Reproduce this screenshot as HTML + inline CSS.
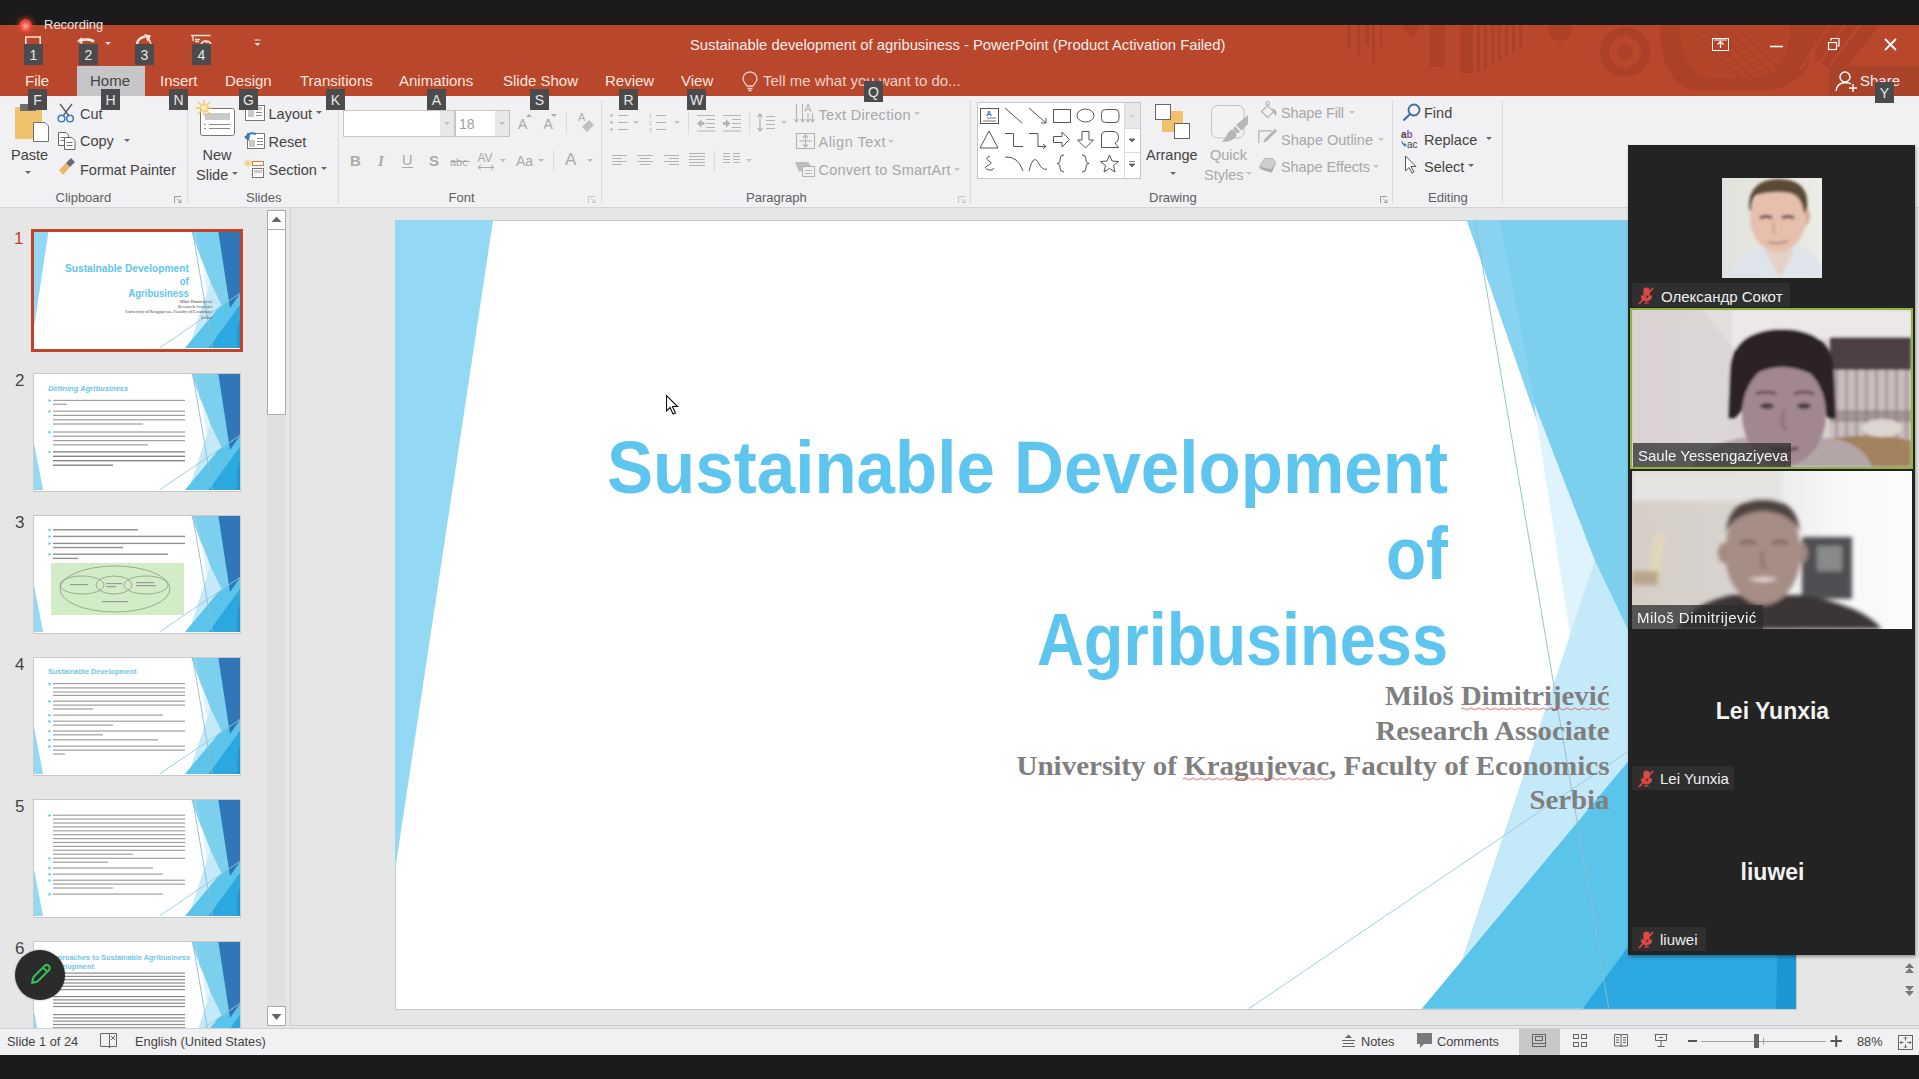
<!DOCTYPE html>
<html><head><meta charset="utf-8">
<style>
*{margin:0;padding:0;box-sizing:border-box}
html,body{width:1919px;height:1079px;overflow:hidden;background:#e6e6e6;font-family:"Liberation Sans",sans-serif;position:relative}
.a{position:absolute}
.t{position:absolute;white-space:nowrap;line-height:1}
#topbar{left:0;top:0;width:1919px;height:25px;background:#1b1b1b}
#titlebar{left:0;top:25px;width:1919px;height:71px;background:#b8472b;overflow:hidden}
#ribbon{left:0;top:96px;width:1919px;height:112px;background:#f1f0f2;border-bottom:1px solid #d5d5d5}
#status{left:0;top:1026px;width:1919px;height:29px;background:#f1f0f2;border-top:1px solid #c8c8c8}
#bottombar{left:0;top:1055px;width:1919px;height:24px;background:#1b1b1b}
.kt{position:absolute;width:19px;height:21px;background:#4b4b4d;color:#e8e8e8;font-size:14px;line-height:23px;text-align:center}
.tab{position:absolute;top:73px;font-size:15px;color:#fbe6df;line-height:15px}
.rt{position:absolute;font-size:15px;color:#444;line-height:15px;white-space:nowrap}
.rd{color:#a6a6a6}
.gl{position:absolute;top:190px;font-size:13.5px;color:#666;line-height:14px;white-space:nowrap}
.sep{position:absolute;top:100px;width:1px;height:104px;background:#dadada}
.dd{position:absolute;width:0;height:0;border-left:3px solid transparent;border-right:3px solid transparent;border-top:3px solid #666}
</style></head><body>
<div class="a" id="topbar"></div>
<div class="a" id="titlebar"></div>
<div class="a" id="ribbon"></div>
<div class="a" id="bottombar"></div>
<svg class="a" style="left:0;top:0" width="1919" height="210" font-family="Liberation Sans, sans-serif">
 <!-- separators -->
 <g fill="#dcdcdc">
  <rect x="187" y="100" width="1" height="104"/><rect x="338" y="100" width="1" height="104"/><rect x="601" y="100" width="1" height="104"/><rect x="970" y="100" width="1" height="104"/><rect x="1392" y="100" width="1" height="104"/><rect x="1502" y="100" width="1" height="104"/>
 </g>
 <!-- group labels -->
 <g font-size="13" fill="#5f5f5f">
  <text x="55.5" y="202">Clipboard</text>
  <text x="246" y="202">Slides</text>
  <text x="448.5" y="202">Font</text>
  <text x="746" y="202">Paragraph</text>
  <text x="1149" y="201.5">Drawing</text>
  <text x="1428" y="201.5">Editing</text>
 </g>
 <!-- launchers -->
 <g fill="none" stroke="#9a9a9a" stroke-width="1">
  <path d="M174.5 203 V196.5 H181 M177 198.5 L180.5 202 M178 202.5 H181 V199.5"/>
  <path d="M588.5 203 V196.5 H595 M591 198.5 L594.5 202 M592 202.5 H595 V199.5" stroke="#c4c4c4"/>
  <path d="M958.5 203 V196.5 H965 M961 198.5 L964.5 202 M962 202.5 H965 V199.5" stroke="#c4c4c4"/>
  <path d="M1380.5 203 V196.5 H1387 M1383 198.5 L1386.5 202 M1384 202.5 H1387 V199.5"/>
 </g>
 <!-- Clipboard group -->
 <rect x="15" y="107" width="27" height="32" rx="1" fill="#f1c16c"/>
 <rect x="20" y="104" width="16" height="7" fill="#6d6d6d"/>
 <path d="M33.5 122.5 H45 L48.5 126 V141.5 H33.5Z" fill="#fff" stroke="#707070" stroke-width="1"/>
 <text x="11" y="160" font-size="14.5" fill="#444">Paste</text>
 <path d="M25 171 L31 171 L28 174Z" fill="#666"/>
 <g fill="none" stroke="#5a5a5a" stroke-width="1.3"><path d="M60 104 L69 116 M72 104 L63 116"/></g>
 <g fill="none" stroke="#3a7bc8" stroke-width="1.5"><circle cx="61.5" cy="118.5" r="3.3"/><circle cx="70" cy="118.5" r="3.3"/></g>
 <text x="80" y="118.5" font-size="14.5" fill="#444">Cut</text>
 <g fill="#fff" stroke="#666" stroke-width="1"><path d="M58.5 132.5 H66 L68.5 135 V145.5 H58.5Z"/><path d="M64.5 137.5 H72 L75 140.5 V149.5 H64.5Z"/></g>
 <g stroke="#777" stroke-width="1"><path d="M60.5 137.5 H64 M60.5 140.5 H64 M66.5 142.5 H72.5 M66.5 145.5 H72.5"/></g>
 <text x="80" y="146" font-size="14.5" fill="#444">Copy</text>
 <path d="M124 139 L130 139 L127 142Z" fill="#666"/>
 <path d="M59 170 L66 163 L70 167 L63 175 Z" fill="#e9b96a"/><path d="M66 163 L71 158 L75 162 L70 167Z" fill="#6b6b6b"/>
 <text x="80" y="174.5" font-size="14.5" fill="#444" textLength="96">Format Painter</text>
 <!-- Slides group -->
 <rect x="200.5" y="108.5" width="34" height="27" rx="2" fill="#fff" stroke="#767676"/>
 <rect x="205" y="113" width="25" height="7" fill="#c9c9c9"/>
 <path d="M204 124.5 H206 M209 124.5 H230 M204 128.5 H206 M209 128.5 H230" stroke="#8a8a8a"/>
 <g stroke="#f5c760" stroke-width="1.4"><path d="M204 100 V116 M196 108 H212 M198.3 102.3 L209.7 113.7 M209.7 102.3 L198.3 113.7"/></g><circle cx="204" cy="108" r="3.5" fill="#fde9b8" stroke="#f5c760"/>
 <text x="202.5" y="159.5" font-size="14.5" fill="#444">New</text>
 <text x="196" y="179.5" font-size="14.5" fill="#444">Slide</text>
 <path d="M232 172 L238 172 L235 175Z" fill="#666"/>
 <rect x="245.5" y="105.5" width="19" height="15" fill="#fff" stroke="#777"/><rect x="248" y="110" width="6" height="7" fill="#c9c9c9"/><rect x="256" y="107" width="6" height="3" fill="#c9c9c9"/><path d="M256 112.5 H262 M256 115.5 H262" stroke="#888"/>
 <text x="268.5" y="118.5" font-size="14.5" fill="#444">Layout</text>
 <path d="M316 111 L322 111 L319 114Z" fill="#666"/>
 <rect x="247.5" y="133.5" width="17" height="15" fill="#fff" stroke="#777"/><rect x="249" y="140" width="6" height="7" fill="#c9c9c9"/><path d="M257 138.5 H263 M257 141.5 H263 M257 144.5 H263" stroke="#888"/>
 <path d="M246 139 Q248 131 256 134" fill="none" stroke="#3d78b8" stroke-width="2"/><path d="M244 136 L249 141 L250 135Z" fill="#3d78b8"/>
 <text x="268.5" y="146.5" font-size="14.5" fill="#444">Reset</text>
 <rect x="252.5" y="161.5" width="11" height="4" fill="#fff" stroke="#e0783a"/>
 <rect x="252.5" y="168.5" width="11" height="9" fill="#fff" stroke="#777"/><rect x="254" y="170" width="8" height="3" fill="#c9c9c9"/>
 <g stroke="#f5c760" stroke-width="1"><path d="M248 159 V167 M244 163 H252 M245 160 L251 166 M251 160 L245 166"/></g>
 <text x="268.5" y="174.5" font-size="14.5" fill="#444">Section</text>
 <path d="M321 167 L327 167 L324 170Z" fill="#666"/>
 <!-- Font group -->
 <rect x="343.5" y="110.5" width="111" height="26" fill="#fff" stroke="#c6c6c6"/>
 <rect x="440" y="111" width="14" height="25" fill="#e8e8e8"/>
 <path d="M444 122 L450 122 L447 125Z" fill="#c0c0c0"/>
 <rect x="455.5" y="110.5" width="54" height="26" fill="#fff" stroke="#c6c6c6"/>
 <rect x="495" y="111" width="14" height="25" fill="#e8e8e8"/>
 <path d="M499 122 L505 122 L502 125Z" fill="#c0c0c0"/>
 <line x1="454.5" y1="110" x2="454.5" y2="137" stroke="#c6c6c6"/>
 <text x="459" y="128.5" font-size="14" fill="#a0a0a0">18</text>
 <g font-size="14" fill="#aaa"><text x="518" y="129">A</text><text x="543.5" y="129">A</text></g>
 <path d="M526 117 L529 114 L532 117Z M551 114 L557 114 L554 117Z" fill="#aaa"/>
 <line x1="566.5" y1="112" x2="566.5" y2="134" stroke="#dcdcdc"/>
 <text x="578" y="121" font-size="11" fill="#b0b0b0">A</text><path d="M582 127 L589 120 L594 125 L587 132Z" fill="#c0c0c0"/>
 <g fill="#aaa">
  <text x="350" y="166" font-size="15" font-weight="bold">B</text>
  <text x="378" y="166" font-size="15" font-style="italic" font-family="Liberation Serif" font-weight="bold">I</text>
  <text x="402" y="165" font-size="14.5">U</text><rect x="402" y="167" width="11" height="1" />
  <text x="429" y="166" font-size="15" font-weight="bold">S</text>
  <text x="450" y="166" font-size="11">abc</text><rect x="450" y="161" width="20" height="1"/>
  <text x="477.5" y="162" font-size="12">AV</text><path d="M478 167.5 H494 M478 167.5 L481 165 M478 167.5 L481 170 M494 167.5 L491 165 M494 167.5 L491 170" stroke="#aaa" fill="none"/>
  <text x="516" y="166" font-size="14">Aa</text>
  <text x="565" y="165" font-size="17">A</text>
 </g>
 <path d="M500 159 L506 159 L503 162Z M538 159 L544 159 L541 162Z M587 159 L593 159 L590 162Z" fill="#bbb"/>
 <line x1="553.5" y1="150" x2="553.5" y2="172" stroke="#dcdcdc"/>
 <!-- Paragraph group -->
 <g stroke="#b4b4b4" stroke-width="1.2" fill="none">
  <path d="M618 115.5 H628 M618 122.5 H628 M618 129.5 H628"/>
  <path d="M656 115.5 H666 M656 122.5 H666 M656 129.5 H666"/>
  <path d="M697 115.5 H715 M706 119.5 H715 M706 123.5 H715 M706 127.5 H715 M697 131 H715"/>
  <path d="M723 115.5 H741 M732 119.5 H741 M732 123.5 H741 M732 127.5 H741 M723 131 H741"/>
  <path d="M766 116.5 H775 M766 120.5 H775 M766 124.5 H775 M766 128.5 H775 M760 114 V131 M757.5 117 L760 114 L762.5 117 M757.5 128 L760 131 L762.5 128"/>
  <path d="M612 155.5 H627 M612 158.5 H622 M612 161.5 H627 M612 164.5 H622"/>
  <path d="M637 155.5 H653 M640 158.5 H650 M637 161.5 H653 M640 164.5 H650"/>
  <path d="M664 155.5 H679 M669 158.5 H679 M664 161.5 H679 M669 164.5 H679"/>
  <path d="M689 153.5 H705 M689 156.5 H705 M689 159.5 H705 M689 162.5 H705 M689 165.5 H705"/>
  <path d="M723 153.5 H730 M733 153.5 H740 M723 156.5 H730 M733 156.5 H740 M723 159.5 H730 M733 159.5 H740 M723 162.5 H730 M733 162.5 H740"/>
 </g>
 <path d="M795 162 H808 L811 166 H802 V171 L799 172 Z" fill="#bdbdbd"/>
 <path d="M697 123.5 L701.5 119.3 V122 H704.5 V125 H701.5 V127.7Z M730.5 123.5 L726 119.3 V122 H723 V125 H726 V127.7Z" fill="#b4b4b4"/>
 <g fill="#b4b4b4"><circle cx="611.5" cy="115.5" r="1.3"/><circle cx="611.5" cy="122.5" r="1.3"/><circle cx="611.5" cy="129.5" r="1.3"/>
  <text x="649" y="118" font-size="5">1</text><text x="649" y="125" font-size="5">2</text><text x="649" y="132" font-size="5">3</text>
 </g>
 <path d="M633 121 L639 121 L636 124Z M674 121 L680 121 L677 124Z M781 121 L787 121 L784 124Z M746 159 L752 159 L749 162Z" fill="#c4c4c4"/>
 <g stroke="#dcdcdc"><line x1="688.5" y1="112" x2="688.5" y2="134"/><line x1="749.5" y1="112" x2="749.5" y2="134"/><line x1="714.5" y1="150" x2="714.5" y2="172"/></g>
 <g stroke="#b4b4b4" fill="none" stroke-width="1.1">
  <path d="M796.5 104 V121 M802.5 104 V121 M808 113 V121 M812.5 113 V121"/><path d="M794.5 119 L796.5 122 L798.5 119 M800.5 119 L802.5 122 L804.5 119 M806 119 L808 122 L810 119 M810.5 119 L812.5 122 L814.5 119"/><text x="804.5" y="112" font-size="10.5" fill="#b4b4b4" stroke="none">A</text>
  <rect x="796.5" y="133.5" width="18" height="15"/><path d="M805.5 135 V147 M803 137.5 L805.5 135 L808 137.5 M803 144.5 L805.5 147 L808 144.5 M799 141 H812" />
  <rect x="802.5" y="166.5" width="12" height="10"/><path d="M805 170.5 H812 M805 173.5 H812"/>
 </g>
 <g font-size="14.5" fill="#a8a8a8">
  <text x="818.5" y="119.5" textLength="92">Text Direction</text>
  <text x="818.5" y="147" textLength="67">Align Text</text>
  <text x="818.5" y="175" textLength="132">Convert to SmartArt</text>
 </g>
 <path d="M914 112 L920 112 L917 115Z M888 140 L894 140 L891 143Z M954 168 L960 168 L957 171Z" fill="#c4c4c4"/>
 <!-- Drawing group -->
 <rect x="977.5" y="102.5" width="163" height="76" fill="#fff" stroke="#c6c6c6"/>
 <rect x="1124" y="103" width="16" height="25" fill="#e8e8e8"/>
 <line x1="1124.5" y1="103" x2="1124.5" y2="178" stroke="#dcdcdc"/>
 <line x1="1124" y1="128.5" x2="1140" y2="128.5" stroke="#dcdcdc"/><line x1="1124" y1="152.5" x2="1140" y2="152.5" stroke="#dcdcdc"/>
 <path d="M1129.5 117 L1132 114.5 L1134.5 117Z" fill="#c8c8c8"/>
 <path d="M1129 139 L1135 139 L1132 142Z M1129 164 L1135 164 L1132 167Z M1129 161.5 H1135" fill="#666" stroke="#666" stroke-width=".8"/>
 <g fill="none" stroke="#555" stroke-width="1">
  <rect x="980.5" y="108.5" width="18" height="15"/><path d="M987 118 H996 M983 121 H996" stroke="#777"/>
  <path d="M1005 108 L1022 123"/><path d="M1029 108 L1046 123 M1046 118 V123 H1041"/>
  <rect x="1053.5" y="109.5" width="17" height="13"/>
  <ellipse cx="1085.5" cy="115.5" rx="8.5" ry="6.5"/>
  <rect x="1101.5" y="109.5" width="17.5" height="13" rx="4"/>
  <path d="M989 131 L998 148 H980 Z"/>
  <path d="M1005 133.5 H1013.5 V146.5 H1023"/>
  <path d="M1029 133.5 H1038 V146.5 H1046 M1043 144 L1046 146.5 L1043 149"/>
  <path d="M1053.5 136.5 H1062 V132 L1069.5 139.5 L1062 147 V142.5 H1053.5Z"/>
  <path d="M1082 131.5 V140 H1077.5 L1085.5 148 L1093.5 140 H1089 V131.5Z"/>
  <path d="M1101.5 147.5 V136 Q1101.5 131.5 1106 131.5 H1113 Q1118.5 131.5 1118.5 138 Q1118.5 142 1115 143 L1118.5 147.5Z"/>
  <path d="M990 156 Q984 158 989 161 Q994 163 987 166 Q983 168 989 170 Q993 171 994 168"/>
  <path d="M1005 157 Q1018 156 1023 171"/>
  <path d="M1029 171 Q1033 154 1038 162 Q1042 171 1047 169"/>
  <path d="M1064 155 Q1060 155 1060 159 V161 Q1060 163 1057 163.5 Q1060 164 1060 166 V168 Q1060 172 1064 172"/>
  <path d="M1082 155 Q1086 155 1086 159 V161 Q1086 163 1089 163.5 Q1086 164 1086 166 V168 Q1086 172 1082 172"/>
  <path d="M1109.5 155 L1112 161 L1118.5 161.5 L1113.5 165.5 L1115 172 L1109.5 168.5 L1104 172 L1105.5 165.5 L1100.5 161.5 L1107 161Z"/>
 </g>
 <text x="986" y="116" font-size="8" fill="#3c6fb6" font-weight="bold">A</text>
 <rect x="1162" y="111" width="21" height="21" fill="#f1c16c"/>
 <rect x="1155.5" y="104.5" width="15" height="15" fill="#fff" stroke="#666"/>
 <rect x="1174.5" y="123.5" width="15" height="15" fill="#fff" stroke="#666"/>
 <text x="1146" y="160" font-size="14.5" fill="#444">Arrange</text>
 <path d="M1170 172 L1176 172 L1173 175Z" fill="#666"/>
 <rect x="1211.5" y="105.5" width="32.5" height="32.5" rx="6" fill="#f3f1f4" stroke="#c4c4c4"/>
 <path d="M1248 115 L1248 124 L1241.5 130.5 L1236 125Z" fill="#b6b6b6"/>
 <path d="M1235 126.5 L1240 131.5 L1238 133.5 L1233 128.5Z" fill="#b6b6b6"/>
 <path d="M1232 129.5 Q1237 130 1236.5 136 Q1234 141.5 1222 142 Q1226 137 1228 133 Q1229.5 130 1232 129.5Z" fill="#b6b6b6"/>
 <g fill="none" stroke="#b4b4b4" stroke-width="1.2">
  <path d="M1261.5 111.5 L1267.5 105.5 L1273.5 111.7 L1267.6 117.5Z"/><circle cx="1267.6" cy="103.3" r="1.8"/>
  <path d="M1258.8 143 V130.8 H1272"/>
 </g>
 <path d="M1272.5 108 Q1277 110 1276.5 114 L1275.5 116.5 Q1274.5 113 1273 112Z" fill="#b4b4b4"/>
 <path d="M1263.5 142.5 L1264.5 139 L1275 128.8 L1277.2 131 L1266.8 141.2Z" fill="#b4b4b4"/>
 <path d="M1259.5 166.5 L1264.5 158.5 H1272.5 L1275.8 162.5 L1271.6 172.2 L1261 169Z" fill="#d0ced0" stroke="#b8b8b8" stroke-width="1"/>
 <path d="M1260 166.5 L1271 169.5 L1275.5 162.5 L1271.6 172.2 L1261 169Z" fill="#aaa"/>
 <text x="1210" y="160" font-size="14.5" fill="#a8a8a8">Quick</text>
 <text x="1204" y="179.5" font-size="14.5" fill="#a8a8a8">Styles</text>
 <path d="M1246 172 L1252 172 L1249 175Z" fill="#c4c4c4"/>
 <g font-size="14.5" fill="#a8a8a8">
  <text x="1281" y="117.5" textLength="63">Shape Fill</text>
  <text x="1281" y="144.5" textLength="92">Shape Outline</text>
  <text x="1281" y="171.5" textLength="89">Shape Effects</text>
 </g>
 <path d="M1349 111 L1355 111 L1352 114Z M1378 138 L1384 138 L1381 141Z M1373 165 L1379 165 L1376 168Z" fill="#c4c4c4"/>
 <!-- Editing group -->
 <circle cx="1414" cy="110" r="5.5" fill="none" stroke="#3f6aa6" stroke-width="1.8"/><path d="M1410 114 L1403.5 120.5" stroke="#3f6aa6" stroke-width="2.2"/>
 <text x="1424" y="118" font-size="14.5" fill="#444">Find</text>
 <text x="1401" y="138" font-size="10" fill="#444" font-weight="bold">a<tspan fill="#8a5aa8">b</tspan></text><text x="1407" y="148" font-size="10" fill="#444">ac</text><path d="M1402 141 Q1402 145 1406 145 M1404 143.5 L1406 145 L1404 146.5" fill="none" stroke="#3d78b8" stroke-width="1.1"/>
 <text x="1424" y="145" font-size="14.5" fill="#444">Replace</text>
 <path d="M1486 137 L1492 137 L1489 140Z" fill="#666"/>
 <path d="M1405.5 156 V171 L1409 167.5 L1412 173 L1414 172 L1411 166.5 L1416 166.5Z" fill="#fff" stroke="#555"/>
 <text x="1424" y="172" font-size="14.5" fill="#444">Select</text>
 <path d="M1468 164 L1474 164 L1471 167Z" fill="#666"/>
</svg>
<svg width="0" height="0" style="position:absolute">
 <defs>
  <symbol id="deco" viewBox="0 0 1400 788">
   <polygon points="0,0 98,0 0,650" fill="#93d9f3"/>
   <polygon points="1071,0 1400,0 1400,788 1260,516" fill="#7dcfee"/>
   <polygon points="1071,0 1104,0 1144,209" fill="#88d4f0"/>
   <polygon points="1138,182 1199,340 1175,419" fill="#def3fb"/>
   <polygon points="1199,340 1290,530 1053,779" fill="#c4e9f8"/>
   <polygon points="1026,788 1253,516 1400,400 1400,788" fill="#5bc4ea"/>
   <polygon points="1187,788 1400,495 1400,788" fill="#2ba8e0"/>
   <polygon points="1380,788 1384,640 1400,600 1400,788" fill="#1d96d2"/>
   <polygon points="1253,0 1400,0 1400,420 1332,516" fill="#2f77b8"/>
   <line x1="1079" y1="0" x2="1213" y2="788" stroke="#8fbccc" stroke-width="0.9" vector-effect="non-scaling-stroke"/>
   <line x1="853" y1="788" x2="1400" y2="417" stroke="#93cadc" stroke-width="0.9" vector-effect="non-scaling-stroke"/>
  </symbol>
  <symbol id="deco2" viewBox="0 0 1400 788">
   <polygon points="0,470 62,788 0,788" fill="#93d9f3"/>
   <polygon points="1071,0 1400,0 1400,788 1260,516" fill="#7dcfee"/>
   <polygon points="1071,0 1104,0 1144,209" fill="#88d4f0"/>
   <polygon points="1138,182 1199,340 1175,419" fill="#def3fb"/>
   <polygon points="1199,340 1290,530 1053,779" fill="#c4e9f8"/>
   <polygon points="1026,788 1253,516 1400,400 1400,788" fill="#5bc4ea"/>
   <polygon points="1187,788 1400,495 1400,788" fill="#2ba8e0"/>
   <polygon points="1380,788 1384,640 1400,600 1400,788" fill="#1d96d2"/>
   <polygon points="1253,0 1400,0 1400,420 1332,516" fill="#2f77b8"/>
   <line x1="1079" y1="0" x2="1213" y2="788" stroke="#8fbccc" stroke-width="0.9" vector-effect="non-scaling-stroke"/>
   <line x1="853" y1="788" x2="1400" y2="417" stroke="#93cadc" stroke-width="0.9" vector-effect="non-scaling-stroke"/>
  </symbol>
  <symbol id="s1text" viewBox="0 0 1400 788">
   <g font-family="Liberation Sans" font-weight="bold" fill="#5ec5ee" text-anchor="end" font-size="74">
    <text x="1052" y="271.8" textLength="841" lengthAdjust="spacingAndGlyphs">Sustainable Development</text>
    <text x="1052" y="357.9" textLength="62" lengthAdjust="spacingAndGlyphs">of</text>
    <text x="1052" y="443.9" textLength="411" lengthAdjust="spacingAndGlyphs">Agribusiness</text>
   </g>
   <g font-family="Liberation Serif" font-weight="bold" fill="#7f7f7f" text-anchor="end" font-size="26.3">
    <text x="1213.5" y="483.7" textLength="224.5" lengthAdjust="spacingAndGlyphs">Miloš Dimitrijević</text>
    <text x="1213.5" y="518.6" textLength="234" lengthAdjust="spacingAndGlyphs">Research Associate</text>
    <text x="1213.5" y="553.5" textLength="593" lengthAdjust="spacingAndGlyphs">University of Kragujevac, Faculty of Economics</text>
    <text x="1213.5" y="588" textLength="80" lengthAdjust="spacingAndGlyphs">Serbia</text>
   </g>
  </symbol>
  <pattern id="txt" width="10" height="5.2" patternUnits="userSpaceOnUse"><rect width="10" height="2.2" y="1" fill="#8c8c8c"/></pattern>
 </defs>
</svg>
<!-- slide panel -->
<div class="a" style="left:290px;top:208px;width:1px;height:818px;background:#d0d0d0"></div>
<div class="a" style="left:267px;top:210px;width:19px;height:816px;background:#e0e0e0"></div>
<div class="a" style="left:267px;top:210px;width:19px;height:20px;background:#fff;border:1px solid #ababab"></div>
<div class="a" style="left:267px;top:229px;width:19px;height:186px;background:#fff;border:1px solid #ababab"></div>
<div class="a" style="left:267px;top:1006px;width:19px;height:20px;background:#fff;border:1px solid #ababab"></div>
<svg class="a" style="left:267px;top:210px" width="19" height="816"><path d="M4.5 12 L9.5 6.5 L14.5 12Z" fill="#666"/><path d="M4.5 804 L9.5 810 L14.5 804Z" fill="#666"/></svg>
<svg class="a" style="left:0;top:208px" width="267" height="820" font-family="Liberation Sans">
 <g font-size="17" fill="#444">
  <text x="14" y="36" fill="#c0401f">1</text><text x="15" y="178">2</text><text x="15" y="320">3</text><text x="15" y="462">4</text><text x="15" y="604">5</text><text x="15" y="746">6</text>
 </g>
 <rect x="32.5" y="22.5" width="209" height="120" fill="none" stroke="#c1432a" stroke-width="3"/>
 <g stroke="#c9c9c9" fill="#fff">
  <rect x="33.5" y="165.5" width="207" height="118"/>
  <rect x="33.5" y="307.5" width="207" height="118"/>
  <rect x="33.5" y="449.5" width="207" height="118"/>
  <rect x="33.5" y="591.5" width="207" height="118"/>
  <rect x="33.5" y="733.5" width="207" height="118"/>
 </g>
 <rect x="34" y="24" width="206" height="117" fill="#fff"/>
 <use href="#deco" x="34" y="24" width="206" height="116"/>
 <use href="#s1text" x="34" y="24" width="206" height="116"/>
 <use href="#deco2" x="34" y="166" width="206" height="116"/>
 <use href="#deco2" x="34" y="308" width="206" height="116"/>
 <use href="#deco2" x="34" y="450" width="206" height="116"/>
 <use href="#deco2" x="34" y="592" width="206" height="116"/>
 <use href="#deco2" x="34" y="734" width="206" height="116"/>
 <!-- thumb2 -->
 <text x="48" y="182.6" font-size="7.6" font-style="italic" font-weight="bold" fill="#6cc6ea">Defining Agribusiness</text>
 <g fill="#a0a0a0"><rect x="53" y="191.8" width="132" height="1.2"/><rect x="53" y="195.6" width="14" height="1.2"/><rect x="53" y="202.6" width="132" height="1.2"/><rect x="53" y="206.8" width="132" height="1.2"/><rect x="53" y="211.2" width="132" height="1.2"/><rect x="53" y="215.4" width="90" height="1.2"/><rect x="53" y="223.4" width="132" height="1.2"/><rect x="53" y="227.6" width="132" height="1.2"/><rect x="53" y="232.0" width="132" height="1.2"/><rect x="53" y="236.2" width="95" height="1.2"/></g>
 <g fill="#858585"><rect x="53" y="243.2" width="132" height="1.4"/><rect x="53" y="247.6" width="132" height="1.4"/><rect x="53" y="252.0" width="132" height="1.4"/><rect x="53" y="256.5" width="60" height="1.4"/></g>
 <g fill="#5ec5ee"><path d="M48.5 191.0 l3 1.6 l-3 1.6Z"/><path d="M48.5 201.8 l3 1.6 l-3 1.6Z"/><path d="M48.5 222.6 l3 1.6 l-3 1.6Z"/><path d="M48.5 242.4 l3 1.6 l-3 1.6Z"/></g>
 <g fill="#8f8f8f"><rect x="53" y="321.0" width="85" height="1.4"/><rect x="53" y="327.7" width="132" height="1.4"/><rect x="53" y="334.7" width="132" height="1.4"/><rect x="53" y="338.8" width="70" height="1.4"/><rect x="53" y="345.5" width="115" height="1.4"/><rect x="53" y="349.7" width="25" height="1.4"/></g>
 <g fill="#5ec5ee"><path d="M48.5 320.2 l3 1.6 l-3 1.6Z"/><path d="M48.5 326.9 l3 1.6 l-3 1.6Z"/><path d="M48.5 333.9 l3 1.6 l-3 1.6Z"/><path d="M48.5 344.7 l3 1.6 l-3 1.6Z"/></g>
 <rect x="51" y="355" width="133" height="52" fill="#d3ecc8"/>
 <g fill="none" stroke="#7f8f78" stroke-width=".7"><ellipse cx="115" cy="381" rx="55" ry="23"/><ellipse cx="82" cy="377" rx="22" ry="9"/><ellipse cx="114" cy="377" rx="18" ry="9"/><ellipse cx="146" cy="377" rx="22" ry="9"/></g>
 <g fill="#999"><rect x="70" y="376" width="18" height="1.2"/><rect x="106" y="375" width="16" height="1.2"/><rect x="106" y="378" width="10" height="1.2"/><rect x="136" y="374" width="18" height="1.2"/><rect x="136" y="377" width="20" height="1.2"/><rect x="102" y="393" width="26" height="1.2"/></g>
 <text x="48" y="465.5" font-size="7.3" font-weight="bold" fill="#72c6e6">Sustainable Development</text>
 <g fill="#a0a0a0"><rect x="53" y="475.0" width="132" height="1.2"/><rect x="53" y="479.3" width="132" height="1.2"/><rect x="53" y="483.4" width="132" height="1.2"/><rect x="53" y="486.8" width="132" height="1.2"/><rect x="53" y="492.6" width="132" height="1.2"/><rect x="53" y="496.5" width="132" height="1.2"/><rect x="53" y="500.4" width="40" height="1.2"/><rect x="53" y="506.5" width="110" height="1.2"/><rect x="53" y="512.6" width="132" height="1.2"/><rect x="53" y="516.5" width="60" height="1.2"/><rect x="53" y="522.4" width="132" height="1.2"/><rect x="53" y="526.2" width="50" height="1.2"/><rect x="53" y="531.2" width="105" height="1.2"/><rect x="53" y="537.6" width="132" height="1.2"/><rect x="53" y="541.5" width="132" height="1.2"/><rect x="53" y="545.4" width="12" height="1.2"/></g>
 <g fill="#5ec5ee"><path d="M48.5 474.2 l3 1.6 l-3 1.6Z"/><path d="M48.5 491.8 l3 1.6 l-3 1.6Z"/><path d="M48.5 505.7 l3 1.6 l-3 1.6Z"/><path d="M48.5 511.8 l3 1.6 l-3 1.6Z"/><path d="M48.5 521.6 l3 1.6 l-3 1.6Z"/><path d="M48.5 530.4 l3 1.6 l-3 1.6Z"/><path d="M48.5 536.8 l3 1.6 l-3 1.6Z"/></g>
 <g fill="#a0a0a0"><rect x="53" y="606.6" width="132" height="1.2"/><rect x="53" y="610.5" width="132" height="1.2"/><rect x="53" y="614.4" width="132" height="1.2"/><rect x="53" y="618.3" width="132" height="1.2"/><rect x="53" y="622.2" width="132" height="1.2"/><rect x="53" y="626.1" width="132" height="1.2"/><rect x="53" y="630.0" width="132" height="1.2"/><rect x="53" y="633.9" width="132" height="1.2"/><rect x="53" y="637.8" width="132" height="1.2"/><rect x="53" y="641.7" width="132" height="1.2"/><rect x="53" y="645.6" width="80" height="1.2"/><rect x="53" y="649.7" width="132" height="1.2"/><rect x="53" y="653.6" width="55" height="1.2"/><rect x="53" y="659.4" width="100" height="1.2"/><rect x="53" y="665.5" width="110" height="1.2"/><rect x="53" y="671.6" width="132" height="1.2"/><rect x="53" y="675.5" width="132" height="1.2"/><rect x="53" y="679.4" width="60" height="1.2"/><rect x="53" y="685.5" width="110" height="1.2"/></g>
 <g fill="#5ec5ee"><path d="M48.5 605.8 l3 1.6 l-3 1.6Z"/><path d="M48.5 648.9 l3 1.6 l-3 1.6Z"/><path d="M48.5 658.6 l3 1.6 l-3 1.6Z"/><path d="M48.5 664.7 l3 1.6 l-3 1.6Z"/><path d="M48.5 670.8 l3 1.6 l-3 1.6Z"/><path d="M48.5 684.7 l3 1.6 l-3 1.6Z"/></g>
 <text x="48" y="752" font-size="7.3" font-weight="bold" fill="#72c6e6">Approaches to Sustainable Agribusiness</text>
 <text x="48" y="760.5" font-size="7.3" font-weight="bold" fill="#72c6e6">Development</text>
 <g fill="#8c8c8c"><rect x="53" y="764.5" width="132" height="1.2"/><rect x="53" y="767.8" width="132" height="1.2"/><rect x="53" y="771.1" width="132" height="1.2"/><rect x="53" y="774.4" width="132" height="1.2"/><rect x="53" y="777.7" width="132" height="1.2"/><rect x="53" y="781.0" width="132" height="1.2"/><rect x="53" y="788.0" width="132" height="1.2"/><rect x="53" y="791.3" width="132" height="1.2"/><rect x="53" y="794.6" width="132" height="1.2"/><rect x="53" y="797.9" width="132" height="1.2"/><rect x="53" y="806.0" width="132" height="1.2"/><rect x="53" y="809.3" width="132" height="1.2"/><rect x="53" y="812.6" width="132" height="1.2"/><rect x="53" y="815.9" width="132" height="1.2"/><rect x="53" y="819.2" width="132" height="1.2"/></g>
</svg>

<!-- pencil button -->
<div class="a" style="left:15px;top:950px;width:50px;height:50px;border-radius:50%;background:#2b2b2b;box-shadow:0 0 2px rgba(0,0,0,.4)"></div>
<svg class="a" style="left:15px;top:950px" width="50" height="50"><path d="M17 33 L18.5 27 L30 15.5 Q32 14 34 16 Q35.5 18 34 20 L22.5 31.5Z M28 17.5 L32.5 22" fill="none" stroke="#35c05a" stroke-width="2" stroke-linejoin="round"/></svg>
<!-- main slide -->
<div class="a" style="left:395px;top:220px;width:1402px;height:790px;background:#fff;border:1px solid #c6c6c6"></div>
<svg class="a" style="left:395px;top:220px" width="1401" height="789"><use href="#deco" x="0" y="0" width="1401" height="789"/><g transform="translate(1,1)"><use href="#s1text" x="0" y="0" width="1400" height="788"/>
 <path d="M1065 488 q2 -2 4 0 t4 0 t4 0 t4 0 t4 0 t4 0 t4 0 t4 0 t4 0 t4 0 t4 0 t4 0 t4 0 t4 0 t4 0 t4 0 t4 0 t4 0 t4 0 t4 0 t4 0 t4 0 t4 0 t4 0 t4 0 t4 0 t4 0 t4 0 t4 0 t4 0 t4 0 t4 0 t4 0 t4 0 t4 0 t4 0 t4 0" fill="none" stroke="#e05050" stroke-width=".8"/>
 <path d="M787 558 q2 -2 4 0 t4 0 t4 0 t4 0 t4 0 t4 0 t4 0 t4 0 t4 0 t4 0 t4 0 t4 0 t4 0 t4 0 t4 0 t4 0 t4 0 t4 0 t4 0 t4 0 t4 0 t4 0 t4 0 t4 0 t4 0 t4 0 t4 0 t4 0 t4 0 t4 0 t4 0 t4 0 t4 0 t4 0 t4 0 t4 0 t4 0" fill="none" stroke="#e05050" stroke-width=".8"/>
</g></svg>
<!-- cursor -->
<svg class="a" style="left:665px;top:394px" width="16" height="22"><path d="M1.5 1.5 V17 L5 13.5 L8 20 L10.5 19 L7.5 12.5 L12.5 12.5Z" fill="#fff" stroke="#111" stroke-width="1.1"/></svg>
<!-- status bar -->
<div class="a" style="left:291px;top:1025px;width:1628px;height:1px;background:#cacaca"></div>
<div class="a" style="left:291px;top:1026px;width:1628px;height:2px;background:#e8e8e8"></div>
<div class="a" style="left:0;top:1028px;width:1919px;height:1px;background:#d2d2d2"></div>
<div class="a" style="left:0;top:1029px;width:1919px;height:26px;background:#f1f0f2"></div>
<div class="a" style="left:1519px;top:1029px;width:41px;height:26px;background:#c8c8ca"></div>
<svg class="a" style="left:0;top:1025px" width="1919" height="30" font-family="Liberation Sans">
 <g font-size="12.8" fill="#444">
  <text x="7" y="21">Slide 1 of 24</text>
  <text x="135" y="21">English (United States)</text>
  <text x="1361" y="21">Notes</text>
  <text x="1437" y="21">Comments</text>
  <text x="1857" y="21">88%</text>
 </g>
 <path d="M100.5 8.5 V21.5 H109.5 V8.5 H100.5 M109.5 8.5 H116.5 V21.5 H109.5 M108.5 21.5 L109.5 23 L110.5 21.5 M111 11 L115 15 M115 11 L111 15" fill="none" stroke="#666" stroke-width="1"/>
 <path d="M1345 13 L1348.5 9.5 L1352 13Z" fill="#666"/><path d="M1342 15.5 H1355 M1343 18.5 H1354 M1342 21.5 H1355" stroke="#666"/>
 <path d="M1417 8 H1432 V19 H1424 L1420 23 V19 H1417Z" fill="#7a7a7a"/>
 <g transform="translate(0,-2)"><rect x="1532.5" y="11.5" width="13" height="12" fill="none" stroke="#666"/><rect x="1535.5" y="13.5" width="7" height="4" fill="none" stroke="#666"/><line x1="1533" y1="20.5" x2="1545" y2="20.5" stroke="#666"/>
 <g fill="none" stroke="#666"><rect x="1573.5" y="11.5" width="5" height="4"/><rect x="1581.5" y="11.5" width="5" height="4"/><rect x="1573.5" y="19.5" width="5" height="4"/><rect x="1581.5" y="19.5" width="5" height="4"/></g>
 <path d="M1614.5 11.5 H1620.5 L1621 13 L1621.5 11.5 H1627.5 V23 H1614.5Z M1621 13 V24 M1616 14.5 H1619 M1616 17 H1619 M1616 19.5 H1619 M1623 14.5 H1626 M1623 17 H1626 M1623 19.5 H1626" fill="none" stroke="#666"/>
 <path d="M1654.5 11.5 H1667.5 M1655.5 11.5 V17.5 H1666.5 V11.5 M1661 17.5 V23 M1657.5 23.5 H1664.5 M1659 14.5 H1663" fill="none" stroke="#666"/>
 </g>
 <rect x="1688" y="15" width="9" height="2" fill="#555"/>
 <rect x="1701" y="16" width="125" height="1" fill="#a0a0a0"/>
 <rect x="1763" y="13" width="1" height="7" fill="#a0a0a0"/>
 <rect x="1754" y="9" width="5" height="14" fill="#666"/>
 <path d="M1830.5 16 H1842 M1836.2 10.5 V22" stroke="#555" stroke-width="2"/>
 <rect x="1898.5" y="10.5" width="14" height="14" fill="none" stroke="#666"/>
 <path d="M1905.5 12 V15.5 M1904 13.5 L1905.5 12 L1907 13.5 M1905.5 23 V19.5 M1904 21.5 L1905.5 23 L1907 21.5 M1900 17.5 H1903.5 M1901.5 16 L1900 17.5 L1901.5 19 M1911 17.5 H1907.5 M1909.5 16 L1911 17.5 L1909.5 19" fill="none" stroke="#666"/>
</svg>
<!-- zoom panel -->

<div class="a" style="left:1628px;top:145px;width:287px;height:810px;background:#232323;overflow:hidden;box-shadow:1px 2px 3px rgba(0,0,0,.35)">
 <!-- tile1 photo -->
 <svg class="a" style="left:94px;top:33px" width="100" height="100">
  <defs><filter id="bl1" x="-20%" y="-20%" width="140%" height="140%"><feGaussianBlur stdDeviation="1.6"/></filter>
   <linearGradient id="bg1" x1="0" y1="0" x2="1" y2="0"><stop offset="0" stop-color="#e2e2dc"/><stop offset="1" stop-color="#ecece6"/></linearGradient></defs>
  <rect width="100" height="100" fill="url(#bg1)"/>
  <g filter="url(#bl1)">
   <path d="M4 100 Q14 76 38 68 L74 66 Q94 74 100 90 V100Z" fill="#dfe4ea"/>
   <path d="M42 72 L58 100 L72 72Z" fill="#e8c4b0" opacity=".6"/>
   <rect x="44" y="58" width="26" height="12" fill="#dcb09a"/>
   <ellipse cx="82" cy="38" rx="6" ry="10" fill="#d8a894"/>
   <ellipse cx="56" cy="40" rx="28" ry="34" fill="#e6c0ac"/>
   <path d="M27 30 Q26 2 56 1 Q88 1 85 30 L82 36 Q80 18 68 15 Q50 12 34 17 Q29 22 29 34Z" fill="#5a4836"/>
   <path d="M38 40 Q44 37 50 40 M60 40 Q66 37 72 40" stroke="#4a3430" stroke-width="3" fill="none"/>
   <path d="M52 44 Q50 54 54 56" stroke="#c99a88" stroke-width="2" fill="none"/>
   <path d="M46 64 Q56 67 66 63" stroke="#b88474" stroke-width="2" fill="none"/>
  </g>
 </svg>
 <!-- label1 -->
 <div class="a" style="left:4px;top:138px;width:158px;height:24px;background:#2f2f2f"></div>
 <svg class="a" style="left:8px;top:141px" width="20" height="20"><path d="M8 4 Q8 2 10.5 2 Q13 2 13 4 V10 Q13 12.5 10.5 12.5 Q8 12.5 8 10Z M5.5 9.5 Q5.5 14.5 10.5 14.5 Q15.5 14.5 15.5 9.5 M10.5 14.5 V17 M8 17 H13" fill="#e04848" stroke="#e04848" stroke-width="1.2"/><path d="M3 18 L17 2" stroke="#e04848" stroke-width="1.6"/></svg>
 <div class="t" style="left:33px;top:144px;font-size:15px;color:#f0f0f0">Олександр Сокот</div>
 <!-- tile2 -->
 <div class="a" style="left:2px;top:163px;width:283px;height:161px;border:2px solid #8db43b;overflow:hidden;background:#d6cfd0">
  <svg class="a" style="left:0;top:0" width="279" height="157">
   <defs><filter id="bl2" x="-10%" y="-10%" width="120%" height="120%"><feGaussianBlur stdDeviation="1.8"/></filter>
    <linearGradient id="wall2" x1="0" y1="0" x2="1" y2="0"><stop offset="0" stop-color="#d4cccd"/><stop offset=".4" stop-color="#dcd5d6"/><stop offset="1" stop-color="#d0c8c9"/></linearGradient></defs>
   <rect width="279" height="157" fill="url(#wall2)"/>
   <g filter="url(#bl2)">
    <path d="M70 0 H279 V30 L200 28 Q150 32 110 48Z" fill="#ece8ea"/><rect x="0" y="0" width="100" height="157" fill="#ddd7d7" opacity=".6"/>
    <rect x="198" y="27" width="81" height="33" fill="#4e4042"/>
    <rect x="198" y="60" width="81" height="68" fill="#c9bdbe"/>
    <g fill="#a89a9c"><rect x="203" y="60" width="3" height="68"/><rect x="213" y="60" width="3" height="68"/><rect x="223" y="60" width="3" height="68"/><rect x="233" y="60" width="3" height="68"/><rect x="243" y="60" width="3" height="68"/><rect x="253" y="60" width="3" height="68"/><rect x="263" y="60" width="3" height="68"/><rect x="273" y="60" width="3" height="68"/></g>
    <rect x="198" y="100" width="81" height="12" fill="#8a7a7a" opacity=".6"/>
    <path d="M185 157 L200 128 Q240 122 279 130 V157Z" fill="#a3835f"/>
    <ellipse cx="250" cy="118" rx="20" ry="9" fill="#ddd5cf"/>
    <path d="M60 157 Q72 134 110 128 L200 128 Q232 134 240 157Z" fill="#b4a6a6"/>
    <path d="M98 60 Q100 20 150 19 Q200 20 202 60 L204 108 Q196 112 190 100 L110 100 Q102 112 96 108Z" fill="#2b2426"/>
    <ellipse cx="152" cy="104" rx="42" ry="52" fill="#a1878f"/>
    <path d="M108 78 Q112 40 152 38 Q192 40 196 78 Q180 58 150 57 Q122 58 108 78Z" fill="#2b2426"/>
    <path d="M124 84 Q134 80 144 84 M162 84 Q172 80 182 84" stroke="#5a4048" stroke-width="2.5" fill="none"/>
    <ellipse cx="135" cy="96" rx="7" ry="3" fill="#4a3a44"/><ellipse cx="172" cy="96" rx="7" ry="3" fill="#4a3a44"/>
    <path d="M152 100 Q148 116 154 120" stroke="#86707a" stroke-width="3" fill="none"/>
    <path d="M138 138 Q152 142 166 138" stroke="#5a3a44" stroke-width="3" fill="none"/>
   </g>
  </svg>
  <div class="a" style="left:1px;top:133px;width:158px;height:24px;background:rgba(44,44,44,.75)"></div>
  <div class="t" style="left:6px;top:138px;font-size:15px;color:#f4f4f4">Saule Yessengaziyeva</div>
 </div>
 <!-- tile3 -->
 <div class="a" style="left:4px;top:326px;width:280px;height:158px;overflow:hidden;background:#e0dcd8">
  <svg class="a" style="left:0;top:0" width="280" height="158">
   <defs><filter id="bl3" x="-10%" y="-10%" width="120%" height="120%"><feGaussianBlur stdDeviation="2"/></filter>
    <linearGradient id="wall3" x1="0" y1="0" x2="1" y2="0"><stop offset="0" stop-color="#d4cec6"/><stop offset=".4" stop-color="#d8d4d0"/><stop offset=".55" stop-color="#eeeeee"/><stop offset=".75" stop-color="#f8f8f8"/><stop offset="1" stop-color="#fbfbfb"/></linearGradient></defs>
   <rect width="280" height="158" fill="url(#wall3)"/>
   <g filter="url(#bl3)">
    <rect x="0" y="0" width="150" height="30" fill="#e6e4e2"/>
    <path d="M14 112 L24 60 L34 64 L28 112Z" fill="#e2d6bc"/><rect x="0" y="100" width="26" height="14" fill="#b9a68a"/>
    <rect x="170" y="66" width="50" height="62" fill="#505052"/>
    <rect x="185" y="75" width="25" height="25" fill="#8a8a8c"/>
    <path d="M45 158 Q60 132 100 124 L170 124 Q230 134 250 158Z" fill="#3b3536"/>
    <ellipse cx="92" cy="82" rx="6" ry="10" fill="#a08880"/><ellipse cx="170" cy="82" rx="6" ry="10" fill="#a08880"/>
    <ellipse cx="131" cy="82" rx="38" ry="52" fill="#a68d85"/>
    <path d="M94 62 Q96 28 131 28 Q166 28 168 62 Q160 42 131 40 Q102 42 94 62Z" fill="#4e4240"/>
    <path d="M108 72 Q116 69 124 72 M140 72 Q148 69 156 72" stroke="#5a4844" stroke-width="2.5" fill="none"/>
    <path d="M131 80 Q128 95 134 98" stroke="#8a7068" stroke-width="3" fill="none"/>
    <path d="M116 108 Q132 104 146 108 Q132 114 116 108Z" fill="#e4d6d0"/>
   </g>
  </svg>
  <div class="a" style="left:0;top:134px;width:131px;height:24px;background:rgba(44,44,44,.75)"></div>
  <div class="t" style="left:5px;top:139px;font-size:15px;letter-spacing:.45px;color:#f4f4f4">Miloš Dimitrijević</div>
 </div>
 <!-- tile4 -->
 <div class="t" style="left:0;top:555px;width:287px;padding-left:2px;text-align:center;font-size:23px;font-weight:bold;color:#f2f2f2">Lei Yunxia</div>
 <div class="a" style="left:4px;top:621px;width:102px;height:24px;background:#2f2f2f"></div>
 <svg class="a" style="left:8px;top:624px" width="20" height="20"><path d="M8 4 Q8 2 10.5 2 Q13 2 13 4 V10 Q13 12.5 10.5 12.5 Q8 12.5 8 10Z M5.5 9.5 Q5.5 14.5 10.5 14.5 Q15.5 14.5 15.5 9.5 M10.5 14.5 V17 M8 17 H13" fill="#e04848" stroke="#e04848" stroke-width="1.2"/><path d="M3 18 L17 2" stroke="#e04848" stroke-width="1.6"/></svg>
 <div class="t" style="left:32px;top:626px;font-size:15px;color:#f0f0f0">Lei Yunxia</div>
 <!-- tile5 -->
 <div class="t" style="left:0;top:715.5px;width:287px;padding-left:2px;text-align:center;font-size:23px;font-weight:bold;color:#f2f2f2">liuwei</div>
 <div class="a" style="left:4px;top:782px;width:74px;height:24px;background:#2f2f2f"></div>
 <svg class="a" style="left:8px;top:785px" width="20" height="20"><path d="M8 4 Q8 2 10.5 2 Q13 2 13 4 V10 Q13 12.5 10.5 12.5 Q8 12.5 8 10Z M5.5 9.5 Q5.5 14.5 10.5 14.5 Q15.5 14.5 15.5 9.5 M10.5 14.5 V17 M8 17 H13" fill="#e04848" stroke="#e04848" stroke-width="1.2"/><path d="M3 18 L17 2" stroke="#e04848" stroke-width="1.6"/></svg>
 <div class="t" style="left:32px;top:787px;font-size:15px;color:#f0f0f0">liuwei</div>
</div>
<!-- right side scroll arrows -->
<svg class="a" style="left:1900px;top:960px" width="19" height="40"><path d="M5 8 L9.5 3 L14 8Z M5 13 L9.5 8 L14 13Z M5 26 L14 26 L9.5 31Z M5 31 L14 31 L9.5 36Z" fill="#777"/></svg>
<!-- title bar content -->
<div class="a" style="left:0;top:0;width:1919px;height:96px">
 <svg class="a" style="left:0;top:0" width="1919" height="96">
  <defs><clipPath id="tbclip"><rect x="0" y="25" width="1919" height="71"/></clipPath></defs>
  <g clip-path="url(#tbclip)">
  <g fill="#ad4128">
   <rect x="1347" y="25" width="4" height="24"/><rect x="1357" y="25" width="3" height="30"/><rect x="1365" y="25" width="4" height="20"/><rect x="1372" y="25" width="3" height="40"/><rect x="1380" y="25" width="2" height="22"/>
   <path d="M1400 25 L1420 25 L1413 38 Z"/>
   <rect x="1430" y="25" width="15" height="42"/><rect x="1460" y="25" width="13" height="48"/>
   <rect x="1477" y="25" width="3" height="46"/><rect x="1484" y="25" width="3" height="44"/><rect x="1491" y="25" width="3" height="40"/><rect x="1498" y="25" width="3" height="36"/><rect x="1505" y="25" width="3" height="32"/><rect x="1512" y="25" width="3" height="28"/><rect x="1519" y="25" width="3" height="24"/>
   <circle cx="1560" cy="29" r="12"/>
   <circle cx="1625" cy="52" r="25"/>
   <path d="M1660 25 L1815 25 C1815 60 1805 90 1760 90 L1700 90 C1670 90 1660 60 1660 25Z"/>
   <path d="M1815 25 L1880 25 L1840 75 L1815 60Z"/>
  </g>
  <circle cx="1625" cy="52" r="16" fill="#b8472b"/>
  <circle cx="1625" cy="52" r="8" fill="#ad4128"/>
  <path d="M1680 25 L1790 25 C1790 55 1780 78 1750 78 L1715 78 C1690 78 1680 55 1680 25Z" fill="#b44529"/>
  <g stroke="#ad4128" stroke-width="3">
   <line x1="1692" y1="30" x2="1740" y2="78"/><line x1="1704" y1="30" x2="1752" y2="78"/><line x1="1716" y1="30" x2="1764" y2="78"/><line x1="1728" y1="30" x2="1773" y2="75"/><line x1="1740" y1="30" x2="1780" y2="70"/>
  </g>
  <g stroke="#b8472b" stroke-width="3">
   <line x1="1830" y1="25" x2="1800" y2="70"/><line x1="1845" y1="25" x2="1815" y2="70"/><line x1="1860" y1="25" x2="1830" y2="65"/>
  </g>
  </g>
  <rect x="1829" y="66" width="90" height="30" fill="#a9432a"/>
 </svg>
 <!-- recording -->
 <div class="a" style="left:19px;top:19px;width:13px;height:13px;border-radius:50%;background:radial-gradient(circle at 50% 55%,#ffb0a8 0%,#f0504a 45%,#d93a2d 80%);box-shadow:0 0 4px 2px rgba(255,80,40,.45)"></div>
 <div class="t" style="left:44px;top:18px;font-size:13px;color:#e9e4e4">Recording</div>
 <!-- QAT icons -->
 <svg class="a" style="left:0;top:30px" width="280" height="30">
  <path d="M25.8 14 V7 H40.2 V14" fill="none" stroke="#f3e1db" stroke-width="1.6"/>
  <path d="M80 11 Q87 7.5 94 11.5" fill="none" stroke="#f3e1db" stroke-width="2.6"/><path d="M77 11 L82 7 L82.5 14.5Z" fill="#f3e1db"/>
  <path d="M105 12 L111 12 L108 15Z" fill="#f3e1db"/>
  <path d="M137 14 Q138 8 145 6.5" fill="none" stroke="#f3e1db" stroke-width="2.6"/><path d="M144 4 L151 5.5 L148 12Z" fill="#f3e1db"/><path d="M148.5 8 L151 14" stroke="#f3e1db" stroke-width="1.5"/>
  <path d="M191 5.5 H210.5 M193 5.5 V11 M195 9.5 H200 M195 11.5 H199" fill="none" stroke="#f3e1db" stroke-width="1.3"/><path d="M201 14 A5.5 5 0 0 1 211 14" fill="none" stroke="#f3e1db" stroke-width="1.6"/><path d="M205 10 L207 13" stroke="#f3e1db" stroke-width="1.2"/>
  <path d="M254.5 13 L260.5 13 L257.5 16Z" fill="#f3e1db"/><path d="M254.5 10 H260.5" stroke="#f3e1db" stroke-width="1"/>
 </svg>
 <div class="kt" style="left:24px;top:44px">1</div>
 <div class="kt" style="left:79px;top:44px">2</div>
 <div class="kt" style="left:135px;top:44px">3</div>
 <div class="kt" style="left:192px;top:44px">4</div>
 <!-- title -->
 <div class="t" style="left:690px;top:38px;font-size:14.8px;color:#fbeeea">Sustainable development of agribusiness - PowerPoint (Product Activation Failed)</div>
 <!-- window controls -->
 <svg class="a" style="left:1700px;top:30px" width="219" height="30">
  <rect x="12.5" y="8.5" width="16" height="12" fill="none" stroke="#fff" stroke-width="1"/><path d="M20.5 18 V12 M17.5 14.5 L20.5 11.5 L23.5 14.5" stroke="#fff" fill="none" stroke-width="1.3"/><line x1="14" y1="10" x2="27" y2="10" stroke="#fff"/>
  <line x1="70" y1="16.5" x2="83" y2="16.5" stroke="#fff" stroke-width="1.6"/>
  <rect x="128.5" y="12.5" width="8" height="7" fill="none" stroke="#fff" stroke-width="1.2"/><path d="M131 10.5 V8.5 H139 V16 H137" fill="none" stroke="#fff" stroke-width="1.2"/>
  <path d="M185 9 L196 20 M196 9 L185 20" stroke="#fff" stroke-width="1.8"/>
 </svg>
 <!-- share -->
 <svg class="a" style="left:1834px;top:70px" width="30" height="24">
  <circle cx="11" cy="7" r="5" fill="none" stroke="#fff" stroke-width="1.4"/><path d="M2 21 Q3 13 11 12.5 Q15 12.5 17 14" fill="none" stroke="#fff" stroke-width="1.4"/><path d="M19 14 V22 M15 18 H23" stroke="#fff" stroke-width="1.4"/>
 </svg>
 <div class="t" style="left:1860px;top:73px;font-size:15px;color:#f6e9e5">Share</div>
 <!-- tabs -->
 <div class="a" style="left:77px;top:66px;width:68px;height:30px;background:#c6c5c7"></div>
 <div class="tab" style="left:25px">File</div>
 <div class="tab" style="left:90px;color:#444">Home</div>
 <div class="tab" style="left:160px">Insert</div>
 <div class="tab" style="left:225px">Design</div>
 <div class="tab" style="left:300px">Transitions</div>
 <div class="tab" style="left:399px">Animations</div>
 <div class="tab" style="left:503px">Slide Show</div>
 <div class="tab" style="left:605px">Review</div>
 <div class="tab" style="left:681px">View</div>
 <svg class="a" style="left:741px;top:70px" width="18" height="22"><path d="M9 2 C4 2 2 6 2 9 C2 12 5 14 6 16 H12 C13 14 16 12 16 9 C16 6 14 2 9 2Z M6.5 18.5 H11.5 M7.5 20.5 H10.5" fill="none" stroke="#f0cfc5" stroke-width="1.3"/></svg>
 <div class="tab" style="left:763px;color:#f0cfc5">Tell me what you want to do...</div>
 <!-- keytips row -->
 <div class="kt" style="left:28px;top:89px">F</div>
 <div class="kt" style="left:101px;top:89px">H</div>
 <div class="kt" style="left:169px;top:89px">N</div>
 <div class="kt" style="left:239px;top:89px">G</div>
 <div class="kt" style="left:326px;top:89px">K</div>
 <div class="kt" style="left:427px;top:89px">A</div>
 <div class="kt" style="left:530px;top:89px">S</div>
 <div class="kt" style="left:619px;top:89px">R</div>
 <div class="kt" style="left:687px;top:89px">W</div>
 <div class="kt" style="left:864px;top:81px">Q</div>
 <div class="kt" style="left:1875px;top:82px">Y</div>
</div>
</body></html>
